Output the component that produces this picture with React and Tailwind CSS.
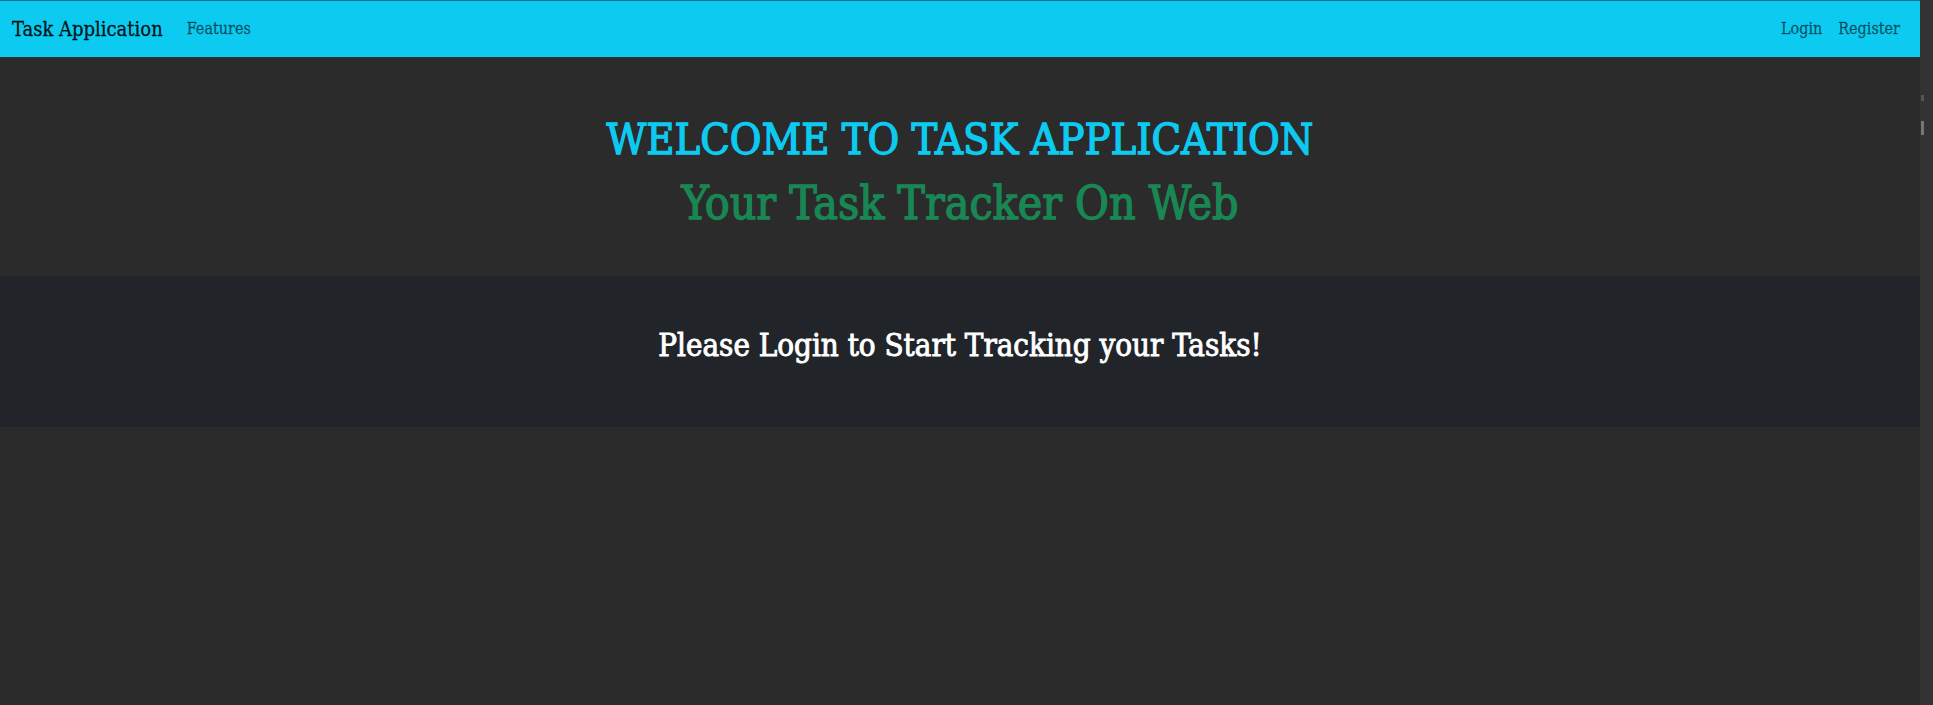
import React from 'react';

const slab = { fontFamily: '"DejaVu Serif Condensed", "DejaVu Serif", serif' };

const Navbar = () => (
  <nav className="h-[57px] bg-[#0dcaf0] border-t border-[#1b6a85] flex items-center justify-between pl-3 pr-5">
    <div className="flex items-center">
      <span className="text-[20px] text-black/90 mr-[24px] [-webkit-text-stroke:0.3px_currentColor]">Task Application</span>
      <a className="text-[16px] text-black/55 [-webkit-text-stroke:0.3px_currentColor]">Features</a>
    </div>
    <div className="flex items-center gap-4 text-[16px] text-black/55 [-webkit-text-stroke:0.3px_currentColor]">
      <a>Login</a>
      <a>Register</a>
    </div>
  </nav>
);

export default function App() {
  return (
    <div className="flex h-[705px] bg-[#2b2b2b]" style={slab}>
      <div className="flex-1 flex flex-col">
        <Navbar />
        {/* Hero */}
        <div className="flex flex-col items-center pt-[52px] h-[219px]">
          <h1 className="text-[43px] leading-[60px] text-[#0dcaf0] [-webkit-text-stroke:1.3px_currentColor]">WELCOME TO TASK APPLICATION</h1>
          <h2 className="text-[46px] leading-[60px] text-[#198754] mt-[4px] [-webkit-text-stroke:1.3px_currentColor]">Your Task Tracker On Web</h2>
        </div>
        {/* Login prompt */}
        <div className="h-[151px] bg-[#212529] flex items-center justify-center">
          <h3 className="text-[31px] text-white pb-[12px] [-webkit-text-stroke:0.9px_currentColor]">Please Login to Start Tracking your Tasks!</h3>
        </div>
      </div>
      {/* scrollbar strip */}
      <div className="w-[13px] bg-[#333333] flex flex-col items-start pt-[95px] gap-[20px]">
        <div className="w-[3px] h-[6px] bg-[#555] ml-[1px]" />
        <div className="w-[3px] h-[14px] bg-[#777] ml-[1px]" />
      </div>
    </div>
  );
}
